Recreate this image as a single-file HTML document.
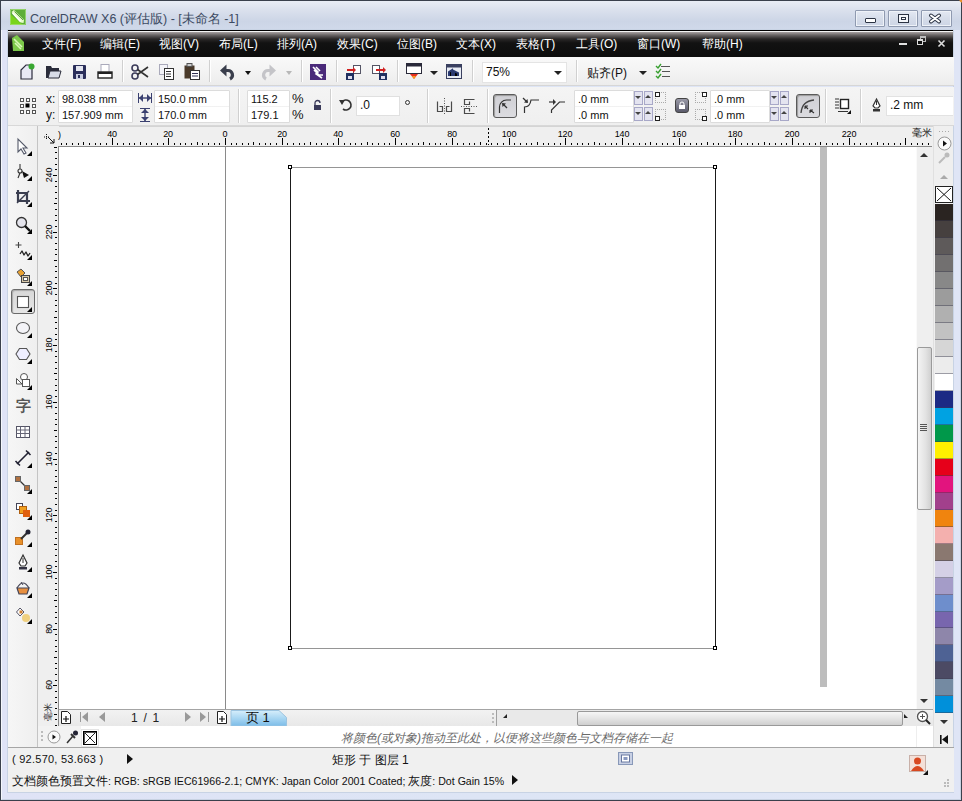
<!DOCTYPE html><html><head><meta charset="utf-8"><style>
*{box-sizing:border-box;margin:0;padding:0}
html,body{width:962px;height:801px;overflow:hidden;background:#d9e2f1;font-family:"Liberation Sans",sans-serif;}
.a{position:absolute}
svg{position:absolute;overflow:visible}
.wb{top:10px;height:17px;border:1px solid #8f9ab0;border-radius:1px;background:linear-gradient(#e4e9f3,#d6ddea 50%,#cdd5e5);box-shadow:inset 0 0 0 1px #eef2f8}
.mi{top:36px;font-size:12px;color:#fff;white-space:nowrap}
.inp{position:absolute;background:#fff;font-size:11px;color:#111;padding-left:3px;white-space:nowrap;line-height:17px}
.t{position:absolute;font-size:12px;color:#111;white-space:nowrap}
.sep{position:absolute;width:1px;background:#d0d0d0;border-right:1px solid #fff;width:2px}
.dd{position:absolute;width:0;height:0;border-left:4px solid transparent;border-right:4px solid transparent;border-top:4px solid #222}
.tick{position:absolute;background:#000;width:1px}
.rl{position:absolute;font-size:9px;color:#000;letter-spacing:-0.2px;line-height:10px;white-space:nowrap}
.sw{position:absolute;left:935px;width:18px;height:17px;border-bottom:1px solid #9aa0a8}
</style></head><body>
<div class="a" style="left:0;top:0;width:962px;height:801px;border:1px solid #3a404c;background:linear-gradient(90deg,#dfe3f6,#dde5f5 50%,#dfe5f6)"></div>
<div class="a" style="left:1px;top:1px;width:960px;height:799px;border:1px solid #f4f7fc;border-bottom-color:#c8d2e2;border-right-color:#c8d2e2"></div>
<div class="a" style="left:1px;top:1px;width:960px;height:29px;background:linear-gradient(#e9edf5,#dbe1ed 30%,#ccd5e6 70%,#d0d9ea)"></div>
<div class="a" style="left:7px;top:29px;width:947px;height:764px;border:1px solid #c8d3e4"></div>
<svg style="left:10px;top:9px" width="16" height="16" viewBox="0 0 16 16"><rect x="0" y="0" width="16" height="16" fill="#5eae38"/><path d="M0 5 L0 16 L13 16 Z" fill="#7ad41c"/><path d="M1.5 3 L4 1 L14 11 L13.5 14 L10.5 13.5 Z" fill="#e6fcc8"/><path d="M4.5 2.5 L13 11" stroke="#5e9a48" stroke-width="1"/><path d="M2.5 4 L10.5 12.5" stroke="#fff" stroke-width="1.5"/><path d="M0.5 0.5 H15.5 V15.5 H0.5Z" fill="none" stroke="#a8e080" stroke-width="1" opacity="0.7"/></svg>
<div class="a" style="left:30px;top:11px;font-size:12.5px;color:#3c4a62;white-space:nowrap">CorelDRAW X6 (评估版) - [未命名 -1]</div>
<div class="a wb" style="left:855px;width:30px"></div>
<div class="a wb" style="left:888px;width:30px"></div>
<div class="a wb" style="left:921px;width:31px"></div>
<div class="a" style="left:865px;top:18px;width:11px;height:5px;border:1px solid #2c3444;background:#fff;border-radius:1px"></div>
<div class="a" style="left:898px;top:14px;width:11px;height:9px;border:1px solid #2c3444;background:#fff;box-shadow:inset 0 0 0 2px #f4f6fa, inset 0 0 0 3px #2c3444"></div>
<svg style="left:928px;top:14px" width="14" height="9" viewBox="0 0 14 9"><path d="M3 1.5 L11 7.5 M11 1.5 L3 7.5" stroke="#2c3444" stroke-width="4" stroke-linecap="round"/><path d="M3 1.5 L11 7.5 M11 1.5 L3 7.5" stroke="#fff" stroke-width="2" stroke-linecap="round"/></svg>
<div class="a" style="left:8px;top:30px;width:945px;height:27px;background:linear-gradient(#000 0,#000 1px,#f4f4f4 1px,#f4f4f4 2px,#a9a3a3 2px,#6a6666 5px,#2a2828 9px,#121212 13px,#0d0d0d 26px)"></div>
<svg style="left:12px;top:35px" width="13" height="17" viewBox="0 0 13 17"><path d="M0 3 L5 0 L12 7 L12 16 L1 16 Z" fill="#7cc84a"/><path d="M2 4 L10 12 M3 8 L9 14" stroke="#d8f8b8" stroke-width="1.6"/></svg>
<div class="a mi" style="left:42px">文件(F)</div>
<div class="a mi" style="left:100px">编辑(E)</div>
<div class="a mi" style="left:159px">视图(V)</div>
<div class="a mi" style="left:219px">布局(L)</div>
<div class="a mi" style="left:277px">排列(A)</div>
<div class="a mi" style="left:337px">效果(C)</div>
<div class="a mi" style="left:397px">位图(B)</div>
<div class="a mi" style="left:456px">文本(X)</div>
<div class="a mi" style="left:516px">表格(T)</div>
<div class="a mi" style="left:576px">工具(O)</div>
<div class="a mi" style="left:637px">窗口(W)</div>
<div class="a mi" style="left:702px">帮助(H)</div>
<div class="a" style="left:899px;top:43px;width:8px;height:2px;background:#e0e0e0"></div>
<div class="a" style="left:920px;top:36px;width:6px;height:6px;border:1px solid #bbb;border-top-width:2px"></div>
<div class="a" style="left:917px;top:39px;width:6px;height:6px;border:1px solid #ddd;border-top-width:2px;background:#111"></div>
<svg style="left:938px;top:40px" width="7" height="7" viewBox="0 0 7 7"><path d="M0.5 0.5 L6.5 6.5 M6.5 0.5 L0.5 6.5" stroke="#ddd" stroke-width="1.6"/></svg>
<div class="a" style="left:8px;top:57px;width:946px;height:29px;background:linear-gradient(#f9f9f9,#f2f2f2 60%,#ececec);border-bottom:1px solid #d6d6d6"></div>
<div class="sep" style="left:122px;top:60px;height:22px"></div>
<div class="sep" style="left:209px;top:60px;height:22px"></div>
<div class="sep" style="left:301px;top:60px;height:22px"></div>
<div class="sep" style="left:336px;top:60px;height:22px"></div>
<div class="sep" style="left:397px;top:60px;height:22px"></div>
<div class="sep" style="left:472px;top:60px;height:22px"></div>
<div class="sep" style="left:576px;top:60px;height:22px"></div>
<svg style="left:19px;top:63px" width="16" height="17" viewBox="0 0 16 17"><path d="M2 16 L2 7 L7 2 L13 2 L13 16 Z" fill="#e8e8f4" stroke="#2c2c3c" stroke-width="1.2"/><circle cx="12.5" cy="3.5" r="3" fill="#3aa832"/></svg>
<svg style="left:45px;top:64px" width="17" height="15" viewBox="0 0 17 15"><path d="M1 14 L1 2 L6 2 L7 4 L14 4 L14 14 Z" fill="#2a2c3a"/><path d="M3 14 L5 7 L16 7 L14 14 Z" fill="#d8dce8" stroke="#2a2c3a"/></svg>
<svg style="left:73px;top:65px" width="13" height="14" viewBox="0 0 13 14"><rect x="0" y="0" width="13" height="14" rx="1" fill="#2a2e5a"/><rect x="3" y="1" width="7" height="5" fill="#e4e6f0"/><rect x="3" y="9" width="7" height="5" fill="#c8cce0"/><rect x="5" y="10" width="2" height="3" fill="#2a2e5a"/></svg>
<svg style="left:97px;top:64px" width="16" height="15" viewBox="0 0 16 15"><rect x="4" y="0.5" width="8" height="8" fill="#fff" stroke="#aab" /><rect x="1" y="8" width="14" height="6" fill="#fff" stroke="#222" stroke-width="1.4"/><rect x="1" y="8" width="14" height="2" fill="#222"/></svg>
<svg style="left:131px;top:64px" width="18" height="16" viewBox="0 0 18 16"><circle cx="4" cy="4" r="3" fill="none" stroke="#3c3c5a" stroke-width="1.6"/><circle cx="4" cy="12" r="3" fill="none" stroke="#3c3c5a" stroke-width="1.6"/><path d="M6.5 5.5 L17 13 M6.5 10.5 L17 3" stroke="#333" stroke-width="1.6"/></svg>
<svg style="left:159px;top:64px" width="15" height="16" viewBox="0 0 15 16"><rect x="0.5" y="0.5" width="8" height="10" fill="#f4f4f8" stroke="#aab"/><rect x="5.5" y="4.5" width="9" height="11" fill="#fff" stroke="#333"/><path d="M7 7.5h5M7 10h5M7 12.5h5" stroke="#333"/></svg>
<svg style="left:184px;top:63px" width="16" height="17" viewBox="0 0 16 17"><rect x="0.5" y="2.5" width="10" height="13" fill="#4a3a2a"/><rect x="3" y="0.5" width="5" height="3" fill="#ccc" stroke="#555"/><rect x="6.5" y="7.5" width="9" height="9" fill="#fff" stroke="#333"/><path d="M8 10.5h6M8 13h6" stroke="#335"/></svg>
<svg style="left:219px;top:64px" width="17" height="16" viewBox="0 0 17 16"><path d="M1 6.5 L7.5 0.5 L7.5 12.5 Z" fill="#3a3e4c"/><path d="M6 6.5 H9 A4.5 4.5 0 0 1 11 15" stroke="#3a3e4c" stroke-width="3.2" fill="none"/></svg>
<div class="dd" style="left:245px;top:71px;border-width:4px 3px 0;border-top-color:#111"></div>
<svg style="left:260px;top:64px" width="17" height="16" viewBox="0 0 17 16"><path d="M16 6.5 L9.5 0.5 L9.5 12.5 Z" fill="#c4c4c8"/><path d="M11 6.5 H8 A4.5 4.5 0 0 0 6 15" stroke="#c4c4c8" stroke-width="3.2" fill="none"/></svg>
<div class="dd" style="left:286px;top:71px;border-width:4px 3px 0;border-top-color:#b8b8b8"></div>
<svg style="left:310px;top:64px" width="16" height="16" viewBox="0 0 16 16"><rect width="16" height="16" fill="#4a2a7a"/><path d="M3 3 L8 8 L6 10 L12 14 M6 3 L10 7 M4 6 L9 11 L13 11" stroke="#fff" stroke-width="1.6" fill="none"/></svg>
<svg style="left:345px;top:64px" width="17" height="17" viewBox="0 0 17 17"><rect x="8.5" y="1.5" width="7" height="8" fill="#fff" stroke="#556"/><path d="M2 6 L10 6" stroke="#d02020" stroke-width="2"/><path d="M8 3 L11 6 L8 9Z" fill="#d02020"/><rect x="1" y="9" width="8" height="7" fill="#203060"/><rect x="3" y="12" width="4" height="3" fill="#dde"/></svg>
<svg style="left:371px;top:64px" width="17" height="17" viewBox="0 0 17 17"><rect x="1.5" y="1.5" width="7" height="8" fill="#fff" stroke="#556"/><path d="M5 6 L14 6" stroke="#d02020" stroke-width="2"/><path d="M12 3 L15 6 L12 9Z" fill="#d02020"/><rect x="8" y="9" width="8" height="7" fill="#203060"/><rect x="10" y="12" width="4" height="3" fill="#dde"/></svg>
<svg style="left:406px;top:63px" width="16" height="17" viewBox="0 0 16 17"><rect x="0.5" y="0.5" width="15" height="10" fill="#fff" stroke="#2a2a3a"/><rect x="0.5" y="0.5" width="15" height="3" fill="#2a2a3a"/><path d="M4 11 L12 11 L8 16Z" fill="#e83020"/><path d="M6 13 L10 13 L8 16Z" fill="#f8a020"/></svg>
<div class="dd" style="left:430px;top:71px;border-top-color:#222"></div>
<svg style="left:446px;top:64px" width="16" height="15" viewBox="0 0 16 15"><rect x="0.5" y="0.5" width="15" height="14" fill="#e8ecf4" stroke="#3a4060"/><rect x="0.5" y="0.5" width="15" height="3" fill="#3a4060"/><path d="M3 12 L3 8 L6 6 L6 12 M8 12 L8 7 L12 9 L12 12" stroke="#2a3a70" stroke-width="2"/></svg>
<div class="inp" style="left:482px;top:62px;width:85px;height:21px;border:1px solid #e4e4e4;line-height:19px;font-size:12px;padding-left:3px">75%</div>
<div class="dd" style="left:554px;top:71px;border-top-color:#222"></div>
<div class="t" style="left:587px;top:65px;font-size:12px">贴齐(P)</div>
<div class="dd" style="left:639px;top:71px;border-top-color:#222"></div>
<svg style="left:655px;top:63px" width="16" height="17" viewBox="0 0 16 17"><path d="M1 3 L3 5 L6 1 M1 8 L3 10 L6 6 M1 13 L3 15 L6 11" stroke="#38a030" stroke-width="1.4" fill="none"/><path d="M6 3.5h9M7 8.5h8M7 13.5h8" stroke="#555" stroke-width="1"/></svg>
<div class="a" style="left:8px;top:87px;width:946px;height:39px;background:linear-gradient(#f4f4f4,#efefef);border-bottom:1px solid #d8d8d8"></div>
<div class="sep" style="left:238px;top:89px;height:34px"></div>
<div class="sep" style="left:330px;top:89px;height:34px"></div>
<div class="sep" style="left:427px;top:89px;height:34px"></div>
<div class="sep" style="left:487px;top:89px;height:34px"></div>
<div class="sep" style="left:825px;top:89px;height:34px"></div>
<div class="sep" style="left:860px;top:89px;height:34px"></div>
<svg style="left:20px;top:98px" width="16" height="16" viewBox="0 0 16 16"><rect x="0.5" y="0.5" width="3" height="3" fill="#fff" stroke="#555"/><rect x="6.5" y="0.5" width="3" height="3" fill="#fff" stroke="#555"/><rect x="12.5" y="0.5" width="3" height="3" fill="#fff" stroke="#555"/><rect x="0.5" y="6.5" width="3" height="3" fill="#fff" stroke="#555"/><rect x="5.5" y="5.5" width="4" height="4" fill="#000"/><rect x="12.5" y="6.5" width="3" height="3" fill="#fff" stroke="#555"/><rect x="0.5" y="12.5" width="3" height="3" fill="#fff" stroke="#555"/><rect x="6.5" y="12.5" width="3" height="3" fill="#fff" stroke="#555"/><rect x="12.5" y="12.5" width="3" height="3" fill="#fff" stroke="#555"/></svg>
<div class="t" style="left:46px;top:92px">x:</div>
<div class="t" style="left:46px;top:108px">y:</div>
<div class="a" style="left:58px;top:90px;width:75px;height:33px;border:1px solid #dcdcdc;border-radius:1px"></div>
<div class="a" style="left:154px;top:90px;width:76px;height:33px;border:1px solid #dcdcdc;border-radius:1px"></div>
<div class="a" style="left:247px;top:90px;width:43px;height:33px;border:1px solid #dcdcdc;border-radius:1px"></div>
<div class="a" style="left:574px;top:90px;width:60px;height:33px;border:1px solid #dcdcdc;border-radius:1px"></div>
<div class="a" style="left:710px;top:90px;width:60px;height:33px;border:1px solid #dcdcdc;border-radius:1px"></div>
<div class="inp" style="left:59px;top:91px;width:73px;height:15px">98.038 mm</div>
<div class="inp" style="left:59px;top:107px;width:73px;height:15px">157.909 mm</div>
<svg style="left:138px;top:93px" width="14" height="10" viewBox="0 0 14 10"><path d="M1 5h12" stroke="#3a4070" stroke-width="1.4"/><path d="M1 5 L5 1 L5 9Z M13 5 L9 1 L9 9Z" fill="#3a4070"/><path d="M0.5 0v10M13.5 0v10" stroke="#3a4070"/></svg>
<svg style="left:140px;top:108px" width="10" height="14" viewBox="0 0 10 14"><path d="M5 1v12" stroke="#3a4070" stroke-width="1.4"/><path d="M5 1 L1 5 L9 5Z M5 13 L1 9 L9 9Z" fill="#3a4070"/><path d="M0 0.5h10M0 13.5h10" stroke="#3a4070"/></svg>
<div class="inp" style="left:155px;top:91px;width:74px;height:15px">150.0 mm</div>
<div class="inp" style="left:155px;top:107px;width:74px;height:15px">170.0 mm</div>
<div class="inp" style="left:248px;top:91px;width:41px;height:15px">115.2</div>
<div class="inp" style="left:248px;top:107px;width:41px;height:15px">179.1</div>
<div class="t" style="left:292px;top:91px;font-size:13px">%</div>
<div class="t" style="left:292px;top:107px;font-size:13px">%</div>
<svg style="left:313px;top:100px" width="9" height="10" viewBox="0 0 9 10"><path d="M2 5 V3 a2.5 2.5 0 0 1 5 0" stroke="#3a3a5a" fill="none" stroke-width="1.3"/><rect x="1" y="5" width="7" height="5" fill="#3a3a5a"/></svg>
<svg style="left:339px;top:98px" width="14" height="14" viewBox="0 0 14 14"><path d="M3 4 A5 5 0 1 1 4 11" stroke="#333" stroke-width="1.6" fill="none"/><path d="M0 2 L6 2 L3 7Z" fill="#333"/></svg>
<div class="inp" style="left:356px;top:96px;width:44px;height:20px;line-height:16px;border:1px solid #e0e0e0;font-size:12px">.0</div>
<div class="a" style="left:405px;top:100px;width:5px;height:5px;border:1px solid #333;border-radius:50%"></div>
<svg style="left:436px;top:98px" width="17" height="17" viewBox="0 0 17 17"><path d="M1.5 3.5v10h5v-5h-3" fill="none" stroke="#4a4a4a" stroke-width="1.2"/><path d="M15.5 3.5v10h-5v-5h3" fill="none" stroke="#4a4a4a" stroke-width="1.2"/><path d="M8.5 0v17" stroke="#555" stroke-dasharray="1 1.5"/></svg>
<svg style="left:461px;top:98px" width="17" height="17" viewBox="0 0 17 17"><path d="M13.5 1.5h-10v5h5v-3" fill="none" stroke="#4a4a4a" stroke-width="1.2"/><path d="M13.5 15.5h-10v-5h5v3" fill="none" stroke="#4a4a4a" stroke-width="1.2"/><path d="M0 8.5h17" stroke="#555" stroke-dasharray="1 1.5"/></svg>
<div class="a" style="left:493px;top:94px;width:24px;height:24px;border:1px solid #5a5a5a;border-radius:3px;background:linear-gradient(#cfcfd4,#dcdce0);box-shadow:inset 1px 1px 1px #999"></div>
<svg style="left:497px;top:98px" width="16" height="16" viewBox="0 0 16 16"><path d="M2.5 15 V9 A7 7 0 0 1 9.5 2 H14" stroke="#333" fill="none" stroke-width="1.2"/><path d="M10 10 L6 6" stroke="#333" stroke-width="1.2"/><path d="M5 5 L9 5.5 L5.5 9Z" fill="#333"/></svg>
<svg style="left:522px;top:97px" width="18" height="18" viewBox="0 0 18 18"><path d="M2.5 16 V10 Q8 10 9 3 H17" stroke="#333" fill="none" stroke-width="1.2"/><path d="M1 1 L5 5" stroke="#333" stroke-width="1.2"/><path d="M6 6 L2 5.5 L5.5 2Z" fill="#333"/></svg>
<svg style="left:548px;top:97px" width="18" height="18" viewBox="0 0 18 18"><path d="M3.5 16 V13 L11.5 5 H17" stroke="#333" fill="none" stroke-width="1.2"/><path d="M1 5 H6" stroke="#333" stroke-width="1.2"/><path d="M8 5 L5 2 L5 8Z" fill="#333"/></svg>
<div class="inp" style="left:575px;top:91px;width:58px;height:15px">.0 mm</div>
<div class="inp" style="left:575px;top:107px;width:58px;height:15px">.0 mm</div>
<div class="a" style="left:634px;top:91px;width:9px;height:14px;border:1px solid #a8a8c8;background:#e4e4f0"></div>
<div class="a" style="left:644px;top:91px;width:9px;height:14px;border:1px solid #a8a8c8;background:#e4e4f0"></div>
<div class="dd" style="left:635px;top:96px;border-width:3px 3px 0;border-top-color:#444"></div>
<div class="dd" style="left:645px;top:95px;border-width:0 3px 3px;border-bottom:3px solid #444"></div>
<div class="a" style="left:634px;top:107px;width:9px;height:14px;border:1px solid #a8a8c8;background:#e4e4f0"></div>
<div class="a" style="left:644px;top:107px;width:9px;height:14px;border:1px solid #a8a8c8;background:#e4e4f0"></div>
<div class="dd" style="left:635px;top:112px;border-width:3px 3px 0;border-top-color:#444"></div>
<div class="dd" style="left:645px;top:111px;border-width:0 3px 3px;border-bottom:3px solid #444"></div>
<div class="a" style="left:655px;top:92px;width:11px;height:11px;border:1px dotted #aaa"></div>
<div class="a" style="left:655px;top:92px;width:5px;height:5px;border:1px solid #222;background:#fff"></div>
<div class="a" style="left:655px;top:109px;width:11px;height:11px;border:1px dotted #aaa"></div>
<div class="a" style="left:655px;top:116px;width:5px;height:5px;border:1px solid #222;background:#fff"></div>
<div class="a" style="left:675px;top:98px;width:14px;height:15px;border:1px solid #444;border-radius:3px;background:linear-gradient(#9a9aa8,#5a5a6a)"></div>
<svg style="left:678px;top:101px" width="8" height="9" viewBox="0 0 8 9"><path d="M2 4V3a2 2 0 0 1 4 0v1" stroke="#fff" fill="none"/><rect x="1" y="4" width="6" height="4" fill="#fff"/></svg>
<div class="a" style="left:695px;top:92px;width:11px;height:11px;border:1px dotted #aaa"></div>
<div class="a" style="left:702px;top:92px;width:5px;height:5px;border:1px solid #222;background:#fff"></div>
<div class="a" style="left:695px;top:109px;width:11px;height:11px;border:1px dotted #aaa"></div>
<div class="a" style="left:702px;top:116px;width:5px;height:5px;border:1px solid #222;background:#fff"></div>
<div class="inp" style="left:711px;top:91px;width:58px;height:15px">.0 mm</div>
<div class="inp" style="left:711px;top:107px;width:58px;height:15px">.0 mm</div>
<div class="a" style="left:770px;top:91px;width:9px;height:14px;border:1px solid #a8a8c8;background:#e4e4f0"></div>
<div class="a" style="left:780px;top:91px;width:9px;height:14px;border:1px solid #a8a8c8;background:#e4e4f0"></div>
<div class="dd" style="left:771px;top:96px;border-width:3px 3px 0;border-top-color:#444"></div>
<div class="dd" style="left:781px;top:95px;border-width:0 3px 3px;border-bottom:3px solid #444"></div>
<div class="a" style="left:770px;top:107px;width:9px;height:14px;border:1px solid #a8a8c8;background:#e4e4f0"></div>
<div class="a" style="left:780px;top:107px;width:9px;height:14px;border:1px solid #a8a8c8;background:#e4e4f0"></div>
<div class="dd" style="left:771px;top:112px;border-width:3px 3px 0;border-top-color:#444"></div>
<div class="dd" style="left:781px;top:111px;border-width:0 3px 3px;border-bottom:3px solid #444"></div>
<div class="a" style="left:796px;top:94px;width:24px;height:24px;border:1px solid #5a5a5a;border-radius:3px;background:linear-gradient(#cfcfd4,#dcdce0);box-shadow:inset 1px 1px 1px #999"></div>
<svg style="left:799px;top:97px" width="18" height="18" viewBox="0 0 18 18"><path d="M2 16 Q3 4 15 3" stroke="#444" fill="none" stroke-width="1.3"/><path d="M6 9 L9 12 M6 9v3M6 9h3 M11 13 L15 16 M11 13v3M11 13h3" stroke="#333" stroke-width="1.1" fill="none"/></svg>
<svg style="left:834px;top:97px" width="18" height="18" viewBox="0 0 18 18"><path d="M1 2h4M1 5h4M1 8h4M1 11h4" stroke="#333"/><rect x="6.5" y="2.5" width="8" height="9" fill="#fff" stroke="#222" stroke-width="1.4"/><path d="M4 14.5h10" stroke="#333"/><path d="M17 13 L17 17 L13 17Z" fill="#111"/></svg>
<svg style="left:871px;top:98px" width="11" height="14" viewBox="0 0 11 14"><path d="M5.5 1 L9 8 L7 10 H4 L2 8 Z" fill="#fff" stroke="#333" stroke-width="1.2"/><path d="M5.5 3 V7" stroke="#333"/><rect x="2" y="11" width="7" height="2.5" fill="#333"/></svg>
<div class="inp" style="left:886px;top:96px;width:67px;height:20px;line-height:17px;border:1px solid #e2e2e2;border-right:0;font-size:12px">.2 mm</div>
<div class="a" style="left:8px;top:126px;width:30px;height:621px;background:linear-gradient(90deg,#f6f6f6,#efefef);border-right:1px solid #c4c4c4"></div>
<div class="a" style="left:11px;top:289px;width:24px;height:25px;border:1px solid #6a6a6a;border-radius:3px;background:linear-gradient(#d8d8d8,#e6e6e6);box-shadow:inset 1px 1px 1px #aaa"></div>
<svg style="left:15px;top:138px" width="16" height="16" viewBox="0 0 16 16"><path d="M3 1 L3 14 L6 11 L9 16 L11 15 L8 10 L12 10 Z" fill="#fff" stroke="#555a6a" stroke-width="1.1"/></svg>
<svg style="left:27px;top:151px" width="5" height="5" viewBox="0 0 5 5"><path d="M5 0 L5 5 L0 5Z" fill="#000"/></svg>
<svg style="left:15px;top:163px" width="16" height="16" viewBox="0 0 16 16"><path d="M5 1 L5 6 M3 8 a2 2 0 1 0 4 0 a2 2 0 1 0 -4 0 M5 10 L3 15" stroke="#333" fill="none" stroke-width="1.1"/><path d="M7 8 L14 12 L9 15 Z" fill="#111"/></svg>
<svg style="left:27px;top:176px" width="5" height="5" viewBox="0 0 5 5"><path d="M5 0 L5 5 L0 5Z" fill="#000"/></svg>
<svg style="left:15px;top:189px" width="16" height="16" viewBox="0 0 16 16"><path d="M3 1 V12 H15 M1 4 H12 V15" stroke="#3a3e50" stroke-width="2.2" fill="none"/><path d="M2 14 L14 2" stroke="#3a3e50" stroke-width="1.4"/></svg>
<svg style="left:27px;top:202px" width="5" height="5" viewBox="0 0 5 5"><path d="M5 0 L5 5 L0 5Z" fill="#000"/></svg>
<svg style="left:15px;top:216px" width="16" height="16" viewBox="0 0 16 16"><circle cx="6.5" cy="6.5" r="5" fill="#e4e4ec" stroke="#333" stroke-width="1.3"/><path d="M10 10 L15 15" stroke="#111" stroke-width="2.4"/></svg>
<svg style="left:27px;top:229px" width="5" height="5" viewBox="0 0 5 5"><path d="M5 0 L5 5 L0 5Z" fill="#000"/></svg>
<svg style="left:15px;top:242px" width="16" height="16" viewBox="0 0 16 16"><path d="M3.5 0v6M0.5 3h6" stroke="#444" stroke-width="1.1"/><path d="M5 12 L7 9 L9 13 L11 10 L13 14 L15 11" stroke="#222" fill="none" stroke-width="1.3" stroke-linejoin="round"/></svg>
<svg style="left:27px;top:255px" width="5" height="5" viewBox="0 0 5 5"><path d="M5 0 L5 5 L0 5Z" fill="#000"/></svg>
<svg style="left:15px;top:268px" width="16" height="16" viewBox="0 0 16 16"><path d="M2 4 L6 1 L10 5 L6 9 Z" fill="#e8a030" stroke="#555"/><rect x="6.5" y="7.5" width="8" height="7" fill="#d8c8a8" stroke="#444"/><rect x="8.5" y="9.5" width="4" height="3" fill="#fff" stroke="#555"/></svg>
<svg style="left:27px;top:281px" width="5" height="5" viewBox="0 0 5 5"><path d="M5 0 L5 5 L0 5Z" fill="#000"/></svg>
<svg style="left:15px;top:294px" width="16" height="16" viewBox="0 0 16 16"><rect x="2.5" y="2.5" width="11" height="11" fill="#fff" stroke="#555" stroke-width="1.1"/></svg>
<svg style="left:27px;top:307px" width="5" height="5" viewBox="0 0 5 5"><path d="M5 0 L5 5 L0 5Z" fill="#000"/></svg>
<svg style="left:15px;top:320px" width="16" height="16" viewBox="0 0 16 16"><ellipse cx="8" cy="8" rx="6.5" ry="5.5" fill="#f4f4f8" stroke="#555" stroke-width="1.1"/></svg>
<svg style="left:27px;top:333px" width="5" height="5" viewBox="0 0 5 5"><path d="M5 0 L5 5 L0 5Z" fill="#000"/></svg>
<svg style="left:15px;top:346px" width="16" height="16" viewBox="0 0 16 16"><path d="M4.5 2.5 H11.5 L15 8 L11.5 13.5 H4.5 L1 8 Z" fill="#eef" stroke="#555" stroke-width="1.1"/></svg>
<svg style="left:27px;top:359px" width="5" height="5" viewBox="0 0 5 5"><path d="M5 0 L5 5 L0 5Z" fill="#000"/></svg>
<svg style="left:15px;top:372px" width="16" height="16" viewBox="0 0 16 16"><path d="M1.5 6.5 L7 12 H1.5 Z" fill="#fff" stroke="#555"/><circle cx="9" cy="5" r="3.5" fill="#fff" stroke="#555"/><rect x="7.5" y="7.5" width="7" height="7" fill="#fff" stroke="#555"/></svg>
<svg style="left:27px;top:385px" width="5" height="5" viewBox="0 0 5 5"><path d="M5 0 L5 5 L0 5Z" fill="#000"/></svg>
<svg style="left:15px;top:397px" width="16" height="16" viewBox="0 0 16 16"><text x="8" y="14" font-size="15" font-weight="bold" text-anchor="middle" fill="#555">字</text></svg>
<svg style="left:15px;top:424px" width="16" height="16" viewBox="0 0 16 16"><rect x="1.5" y="2.5" width="13" height="11" fill="#fff" stroke="#556"/><path d="M1.5 6h13M1.5 9.5h13M5.5 2.5v11M10 2.5v11" stroke="#667"/></svg>
<svg style="left:15px;top:450px" width="16" height="16" viewBox="0 0 16 16"><path d="M2 14 L14 2" stroke="#223" stroke-width="1.6"/><path d="M0.5 11 L5 15.5 M11 0.5 L15.5 5" stroke="#223" stroke-width="1.6"/></svg>
<svg style="left:27px;top:463px" width="5" height="5" viewBox="0 0 5 5"><path d="M5 0 L5 5 L0 5Z" fill="#000"/></svg>
<svg style="left:15px;top:476px" width="16" height="16" viewBox="0 0 16 16"><path d="M3 3 L12 12" stroke="#333" stroke-width="1.2"/><rect x="0.5" y="0.5" width="5" height="5" fill="#b07040" stroke="#666"/><rect x="9.5" y="9.5" width="5" height="5" fill="#b07040" stroke="#666"/></svg>
<svg style="left:27px;top:489px" width="5" height="5" viewBox="0 0 5 5"><path d="M5 0 L5 5 L0 5Z" fill="#000"/></svg>
<svg style="left:15px;top:502px" width="16" height="16" viewBox="0 0 16 16"><rect x="1.5" y="1.5" width="6" height="6" fill="#fff" stroke="#445"/><rect x="4.5" y="4.5" width="7" height="7" fill="#f0a020" stroke="#b06010"/><rect x="8" y="8" width="7" height="7" fill="#e06010"/></svg>
<svg style="left:27px;top:515px" width="5" height="5" viewBox="0 0 5 5"><path d="M5 0 L5 5 L0 5Z" fill="#000"/></svg>
<svg style="left:15px;top:529px" width="16" height="16" viewBox="0 0 16 16"><rect x="0.5" y="8.5" width="7" height="7" fill="#e8902a" stroke="#c07020"/><path d="M6 10 L12 4" stroke="#333" stroke-width="2"/><circle cx="13" cy="3" r="2.5" fill="#223"/></svg>
<svg style="left:27px;top:542px" width="5" height="5" viewBox="0 0 5 5"><path d="M5 0 L5 5 L0 5Z" fill="#000"/></svg>
<svg style="left:15px;top:554px" width="16" height="16" viewBox="0 0 16 16"><path d="M8 1 L12 9 L10 12 H6 L4 9 Z" fill="#fff" stroke="#333" stroke-width="1.2"/><path d="M8 4 V9" stroke="#333"/><rect x="4" y="13" width="8" height="2.5" fill="#334"/></svg>
<svg style="left:27px;top:567px" width="5" height="5" viewBox="0 0 5 5"><path d="M5 0 L5 5 L0 5Z" fill="#000"/></svg>
<svg style="left:15px;top:580px" width="16" height="16" viewBox="0 0 16 16"><path d="M2 8 H14 L12 14 H4 Z" fill="#e89040" stroke="#445" stroke-width="1.2"/><path d="M2 8 Q8 -2 14 8" stroke="#445" fill="none" stroke-width="1.2"/><path d="M6 2 L8 5" stroke="#445"/></svg>
<svg style="left:27px;top:593px" width="5" height="5" viewBox="0 0 5 5"><path d="M5 0 L5 5 L0 5Z" fill="#000"/></svg>
<svg style="left:15px;top:606px" width="16" height="16" viewBox="0 0 16 16"><path d="M4 1 L8 5 L4 9 L0.5 5 Z" fill="#fff" stroke="#556" transform="translate(1 1)"/><rect x="4.5" y="4.5" width="3" height="3" fill="#d08030"/><circle cx="11" cy="12" r="4" fill="#f0d080"/></svg>
<svg style="left:27px;top:619px" width="5" height="5" viewBox="0 0 5 5"><path d="M5 0 L5 5 L0 5Z" fill="#000"/></svg>
<div class="a" style="left:38px;top:126px;width:895px;height:21px;background:#efefef;border-top:1px solid #d4d4d4"></div>
<div class="a" style="left:38px;top:126px;width:21px;height:600px;background:#efefef"></div>
<div class="a" style="left:58px;top:146px;width:874px;height:1px;background:#8a8a8a"></div>
<div class="a" style="left:58px;top:146px;width:1px;height:580px;background:#8a8a8a"></div>
<div class="a" style="left:488px;top:128px;width:1px;height:17px;background:repeating-linear-gradient(#000 0,#000 2px,transparent 2px,transparent 4px)"></div>
<svg style="left:44px;top:133px" width="12" height="11" viewBox="0 0 12 11"><path d="M0 4h5M2.5 1v6" stroke="#111" stroke-dasharray="1 1"/><path d="M4 4 L10 10 M10 6v4h-4" stroke="#111" fill="none"/></svg>
<div class="tick" style="left:61px;top:143px;height:2px"></div><div class="tick" style="left:66px;top:143px;height:2px"></div><div class="tick" style="left:72px;top:143px;height:2px"></div><div class="tick" style="left:78px;top:143px;height:2px"></div><div class="tick" style="left:83px;top:142px;height:3px"></div><div class="tick" style="left:89px;top:143px;height:2px"></div><div class="tick" style="left:95px;top:143px;height:2px"></div><div class="tick" style="left:100px;top:143px;height:2px"></div><div class="tick" style="left:106px;top:143px;height:2px"></div><div class="tick" style="left:112px;top:138px;height:7px"></div><div class="rl" style="left:97px;top:129px;width:30px;text-align:center">40</div><div class="tick" style="left:117px;top:143px;height:2px"></div><div class="tick" style="left:123px;top:143px;height:2px"></div><div class="tick" style="left:129px;top:143px;height:2px"></div><div class="tick" style="left:134px;top:143px;height:2px"></div><div class="tick" style="left:140px;top:142px;height:3px"></div><div class="tick" style="left:146px;top:143px;height:2px"></div><div class="tick" style="left:151px;top:143px;height:2px"></div><div class="tick" style="left:157px;top:143px;height:2px"></div><div class="tick" style="left:163px;top:143px;height:2px"></div><div class="tick" style="left:168px;top:138px;height:7px"></div><div class="rl" style="left:153px;top:129px;width:30px;text-align:center">20</div><div class="tick" style="left:174px;top:143px;height:2px"></div><div class="tick" style="left:180px;top:143px;height:2px"></div><div class="tick" style="left:185px;top:143px;height:2px"></div><div class="tick" style="left:191px;top:143px;height:2px"></div><div class="tick" style="left:197px;top:142px;height:3px"></div><div class="tick" style="left:202px;top:143px;height:2px"></div><div class="tick" style="left:208px;top:143px;height:2px"></div><div class="tick" style="left:214px;top:143px;height:2px"></div><div class="tick" style="left:219px;top:143px;height:2px"></div><div class="tick" style="left:225px;top:138px;height:7px"></div><div class="rl" style="left:210px;top:129px;width:30px;text-align:center">0</div><div class="tick" style="left:231px;top:143px;height:2px"></div><div class="tick" style="left:236px;top:143px;height:2px"></div><div class="tick" style="left:242px;top:143px;height:2px"></div><div class="tick" style="left:248px;top:143px;height:2px"></div><div class="tick" style="left:253px;top:142px;height:3px"></div><div class="tick" style="left:259px;top:143px;height:2px"></div><div class="tick" style="left:265px;top:143px;height:2px"></div><div class="tick" style="left:270px;top:143px;height:2px"></div><div class="tick" style="left:276px;top:143px;height:2px"></div><div class="tick" style="left:282px;top:138px;height:7px"></div><div class="rl" style="left:267px;top:129px;width:30px;text-align:center">20</div><div class="tick" style="left:287px;top:143px;height:2px"></div><div class="tick" style="left:293px;top:143px;height:2px"></div><div class="tick" style="left:299px;top:143px;height:2px"></div><div class="tick" style="left:304px;top:143px;height:2px"></div><div class="tick" style="left:310px;top:142px;height:3px"></div><div class="tick" style="left:316px;top:143px;height:2px"></div><div class="tick" style="left:321px;top:143px;height:2px"></div><div class="tick" style="left:327px;top:143px;height:2px"></div><div class="tick" style="left:333px;top:143px;height:2px"></div><div class="tick" style="left:338px;top:138px;height:7px"></div><div class="rl" style="left:323px;top:129px;width:30px;text-align:center">40</div><div class="tick" style="left:344px;top:143px;height:2px"></div><div class="tick" style="left:350px;top:143px;height:2px"></div><div class="tick" style="left:355px;top:143px;height:2px"></div><div class="tick" style="left:361px;top:143px;height:2px"></div><div class="tick" style="left:367px;top:142px;height:3px"></div><div class="tick" style="left:372px;top:143px;height:2px"></div><div class="tick" style="left:378px;top:143px;height:2px"></div><div class="tick" style="left:384px;top:143px;height:2px"></div><div class="tick" style="left:389px;top:143px;height:2px"></div><div class="tick" style="left:395px;top:138px;height:7px"></div><div class="rl" style="left:380px;top:129px;width:30px;text-align:center">60</div><div class="tick" style="left:401px;top:143px;height:2px"></div><div class="tick" style="left:406px;top:143px;height:2px"></div><div class="tick" style="left:412px;top:143px;height:2px"></div><div class="tick" style="left:418px;top:143px;height:2px"></div><div class="tick" style="left:423px;top:142px;height:3px"></div><div class="tick" style="left:429px;top:143px;height:2px"></div><div class="tick" style="left:435px;top:143px;height:2px"></div><div class="tick" style="left:440px;top:143px;height:2px"></div><div class="tick" style="left:446px;top:143px;height:2px"></div><div class="tick" style="left:452px;top:138px;height:7px"></div><div class="rl" style="left:437px;top:129px;width:30px;text-align:center">80</div><div class="tick" style="left:457px;top:143px;height:2px"></div><div class="tick" style="left:463px;top:143px;height:2px"></div><div class="tick" style="left:469px;top:143px;height:2px"></div><div class="tick" style="left:474px;top:143px;height:2px"></div><div class="tick" style="left:480px;top:142px;height:3px"></div><div class="tick" style="left:486px;top:143px;height:2px"></div><div class="tick" style="left:491px;top:143px;height:2px"></div><div class="tick" style="left:497px;top:143px;height:2px"></div><div class="tick" style="left:503px;top:143px;height:2px"></div><div class="tick" style="left:509px;top:138px;height:7px"></div><div class="rl" style="left:494px;top:129px;width:30px;text-align:center">100</div><div class="tick" style="left:514px;top:143px;height:2px"></div><div class="tick" style="left:520px;top:143px;height:2px"></div><div class="tick" style="left:526px;top:143px;height:2px"></div><div class="tick" style="left:531px;top:143px;height:2px"></div><div class="tick" style="left:537px;top:142px;height:3px"></div><div class="tick" style="left:543px;top:143px;height:2px"></div><div class="tick" style="left:548px;top:143px;height:2px"></div><div class="tick" style="left:554px;top:143px;height:2px"></div><div class="tick" style="left:560px;top:143px;height:2px"></div><div class="tick" style="left:565px;top:138px;height:7px"></div><div class="rl" style="left:550px;top:129px;width:30px;text-align:center">120</div><div class="tick" style="left:571px;top:143px;height:2px"></div><div class="tick" style="left:577px;top:143px;height:2px"></div><div class="tick" style="left:582px;top:143px;height:2px"></div><div class="tick" style="left:588px;top:143px;height:2px"></div><div class="tick" style="left:594px;top:142px;height:3px"></div><div class="tick" style="left:599px;top:143px;height:2px"></div><div class="tick" style="left:605px;top:143px;height:2px"></div><div class="tick" style="left:611px;top:143px;height:2px"></div><div class="tick" style="left:616px;top:143px;height:2px"></div><div class="tick" style="left:622px;top:138px;height:7px"></div><div class="rl" style="left:607px;top:129px;width:30px;text-align:center">140</div><div class="tick" style="left:628px;top:143px;height:2px"></div><div class="tick" style="left:633px;top:143px;height:2px"></div><div class="tick" style="left:639px;top:143px;height:2px"></div><div class="tick" style="left:645px;top:143px;height:2px"></div><div class="tick" style="left:650px;top:142px;height:3px"></div><div class="tick" style="left:656px;top:143px;height:2px"></div><div class="tick" style="left:662px;top:143px;height:2px"></div><div class="tick" style="left:667px;top:143px;height:2px"></div><div class="tick" style="left:673px;top:143px;height:2px"></div><div class="tick" style="left:679px;top:138px;height:7px"></div><div class="rl" style="left:664px;top:129px;width:30px;text-align:center">160</div><div class="tick" style="left:684px;top:143px;height:2px"></div><div class="tick" style="left:690px;top:143px;height:2px"></div><div class="tick" style="left:696px;top:143px;height:2px"></div><div class="tick" style="left:701px;top:143px;height:2px"></div><div class="tick" style="left:707px;top:142px;height:3px"></div><div class="tick" style="left:713px;top:143px;height:2px"></div><div class="tick" style="left:718px;top:143px;height:2px"></div><div class="tick" style="left:724px;top:143px;height:2px"></div><div class="tick" style="left:730px;top:143px;height:2px"></div><div class="tick" style="left:735px;top:138px;height:7px"></div><div class="rl" style="left:720px;top:129px;width:30px;text-align:center">180</div><div class="tick" style="left:741px;top:143px;height:2px"></div><div class="tick" style="left:747px;top:143px;height:2px"></div><div class="tick" style="left:752px;top:143px;height:2px"></div><div class="tick" style="left:758px;top:143px;height:2px"></div><div class="tick" style="left:764px;top:142px;height:3px"></div><div class="tick" style="left:769px;top:143px;height:2px"></div><div class="tick" style="left:775px;top:143px;height:2px"></div><div class="tick" style="left:781px;top:143px;height:2px"></div><div class="tick" style="left:786px;top:143px;height:2px"></div><div class="tick" style="left:792px;top:138px;height:7px"></div><div class="rl" style="left:777px;top:129px;width:30px;text-align:center">200</div><div class="tick" style="left:798px;top:143px;height:2px"></div><div class="tick" style="left:803px;top:143px;height:2px"></div><div class="tick" style="left:809px;top:143px;height:2px"></div><div class="tick" style="left:815px;top:143px;height:2px"></div><div class="tick" style="left:820px;top:142px;height:3px"></div><div class="tick" style="left:826px;top:143px;height:2px"></div><div class="tick" style="left:832px;top:143px;height:2px"></div><div class="tick" style="left:837px;top:143px;height:2px"></div><div class="tick" style="left:843px;top:143px;height:2px"></div><div class="tick" style="left:849px;top:138px;height:7px"></div><div class="rl" style="left:834px;top:129px;width:30px;text-align:center">220</div><div class="tick" style="left:854px;top:143px;height:2px"></div><div class="tick" style="left:860px;top:143px;height:2px"></div><div class="tick" style="left:866px;top:143px;height:2px"></div><div class="tick" style="left:871px;top:143px;height:2px"></div><div class="tick" style="left:877px;top:142px;height:3px"></div><div class="tick" style="left:883px;top:143px;height:2px"></div><div class="tick" style="left:888px;top:143px;height:2px"></div><div class="tick" style="left:894px;top:143px;height:2px"></div><div class="tick" style="left:900px;top:143px;height:2px"></div><div class="tick" style="left:905px;top:138px;height:7px"></div><div class="tick" style="left:911px;top:143px;height:2px"></div><div class="tick" style="left:917px;top:143px;height:2px"></div><div class="tick" style="left:922px;top:143px;height:2px"></div><div class="tick" style="left:928px;top:143px;height:2px"></div>
<div class="rl" style="left:58px;top:130px;">)</div>
<div class="rl" style="left:912px;top:128px;font-size:9.5px;letter-spacing:-0.5px;color:#111">毫米</div>
<div class="tick" style="left:54px;top:147px;width:3px;height:1px"></div><div class="tick" style="left:55px;top:152px;width:2px;height:1px"></div><div class="tick" style="left:55px;top:158px;width:2px;height:1px"></div><div class="tick" style="left:55px;top:164px;width:2px;height:1px"></div><div class="tick" style="left:55px;top:169px;width:2px;height:1px"></div><div class="tick" style="left:53px;top:175px;width:4px;height:1px"></div><div class="rl" style="left:34px;top:170px;width:30px;text-align:center;transform:rotate(-90deg);transform-origin:15px 5px">240</div><div class="tick" style="left:55px;top:181px;width:2px;height:1px"></div><div class="tick" style="left:55px;top:186px;width:2px;height:1px"></div><div class="tick" style="left:55px;top:192px;width:2px;height:1px"></div><div class="tick" style="left:55px;top:198px;width:2px;height:1px"></div><div class="tick" style="left:54px;top:203px;width:3px;height:1px"></div><div class="tick" style="left:55px;top:209px;width:2px;height:1px"></div><div class="tick" style="left:55px;top:215px;width:2px;height:1px"></div><div class="tick" style="left:55px;top:220px;width:2px;height:1px"></div><div class="tick" style="left:55px;top:226px;width:2px;height:1px"></div><div class="tick" style="left:53px;top:232px;width:4px;height:1px"></div><div class="rl" style="left:34px;top:227px;width:30px;text-align:center;transform:rotate(-90deg);transform-origin:15px 5px">220</div><div class="tick" style="left:55px;top:237px;width:2px;height:1px"></div><div class="tick" style="left:55px;top:243px;width:2px;height:1px"></div><div class="tick" style="left:55px;top:249px;width:2px;height:1px"></div><div class="tick" style="left:55px;top:254px;width:2px;height:1px"></div><div class="tick" style="left:54px;top:260px;width:3px;height:1px"></div><div class="tick" style="left:55px;top:266px;width:2px;height:1px"></div><div class="tick" style="left:55px;top:271px;width:2px;height:1px"></div><div class="tick" style="left:55px;top:277px;width:2px;height:1px"></div><div class="tick" style="left:55px;top:283px;width:2px;height:1px"></div><div class="tick" style="left:53px;top:288px;width:4px;height:1px"></div><div class="rl" style="left:34px;top:283px;width:30px;text-align:center;transform:rotate(-90deg);transform-origin:15px 5px">200</div><div class="tick" style="left:55px;top:294px;width:2px;height:1px"></div><div class="tick" style="left:55px;top:300px;width:2px;height:1px"></div><div class="tick" style="left:55px;top:305px;width:2px;height:1px"></div><div class="tick" style="left:55px;top:311px;width:2px;height:1px"></div><div class="tick" style="left:54px;top:317px;width:3px;height:1px"></div><div class="tick" style="left:55px;top:322px;width:2px;height:1px"></div><div class="tick" style="left:55px;top:328px;width:2px;height:1px"></div><div class="tick" style="left:55px;top:334px;width:2px;height:1px"></div><div class="tick" style="left:55px;top:339px;width:2px;height:1px"></div><div class="tick" style="left:53px;top:345px;width:4px;height:1px"></div><div class="rl" style="left:34px;top:340px;width:30px;text-align:center;transform:rotate(-90deg);transform-origin:15px 5px">180</div><div class="tick" style="left:55px;top:351px;width:2px;height:1px"></div><div class="tick" style="left:55px;top:356px;width:2px;height:1px"></div><div class="tick" style="left:55px;top:362px;width:2px;height:1px"></div><div class="tick" style="left:55px;top:368px;width:2px;height:1px"></div><div class="tick" style="left:54px;top:373px;width:3px;height:1px"></div><div class="tick" style="left:55px;top:379px;width:2px;height:1px"></div><div class="tick" style="left:55px;top:385px;width:2px;height:1px"></div><div class="tick" style="left:55px;top:390px;width:2px;height:1px"></div><div class="tick" style="left:55px;top:396px;width:2px;height:1px"></div><div class="tick" style="left:53px;top:402px;width:4px;height:1px"></div><div class="rl" style="left:34px;top:397px;width:30px;text-align:center;transform:rotate(-90deg);transform-origin:15px 5px">160</div><div class="tick" style="left:55px;top:407px;width:2px;height:1px"></div><div class="tick" style="left:55px;top:413px;width:2px;height:1px"></div><div class="tick" style="left:55px;top:419px;width:2px;height:1px"></div><div class="tick" style="left:55px;top:424px;width:2px;height:1px"></div><div class="tick" style="left:54px;top:430px;width:3px;height:1px"></div><div class="tick" style="left:55px;top:436px;width:2px;height:1px"></div><div class="tick" style="left:55px;top:441px;width:2px;height:1px"></div><div class="tick" style="left:55px;top:447px;width:2px;height:1px"></div><div class="tick" style="left:55px;top:453px;width:2px;height:1px"></div><div class="tick" style="left:53px;top:459px;width:4px;height:1px"></div><div class="rl" style="left:34px;top:454px;width:30px;text-align:center;transform:rotate(-90deg);transform-origin:15px 5px">140</div><div class="tick" style="left:55px;top:464px;width:2px;height:1px"></div><div class="tick" style="left:55px;top:470px;width:2px;height:1px"></div><div class="tick" style="left:55px;top:476px;width:2px;height:1px"></div><div class="tick" style="left:55px;top:481px;width:2px;height:1px"></div><div class="tick" style="left:54px;top:487px;width:3px;height:1px"></div><div class="tick" style="left:55px;top:493px;width:2px;height:1px"></div><div class="tick" style="left:55px;top:498px;width:2px;height:1px"></div><div class="tick" style="left:55px;top:504px;width:2px;height:1px"></div><div class="tick" style="left:55px;top:510px;width:2px;height:1px"></div><div class="tick" style="left:53px;top:515px;width:4px;height:1px"></div><div class="rl" style="left:34px;top:510px;width:30px;text-align:center;transform:rotate(-90deg);transform-origin:15px 5px">120</div><div class="tick" style="left:55px;top:521px;width:2px;height:1px"></div><div class="tick" style="left:55px;top:527px;width:2px;height:1px"></div><div class="tick" style="left:55px;top:532px;width:2px;height:1px"></div><div class="tick" style="left:55px;top:538px;width:2px;height:1px"></div><div class="tick" style="left:54px;top:544px;width:3px;height:1px"></div><div class="tick" style="left:55px;top:549px;width:2px;height:1px"></div><div class="tick" style="left:55px;top:555px;width:2px;height:1px"></div><div class="tick" style="left:55px;top:561px;width:2px;height:1px"></div><div class="tick" style="left:55px;top:566px;width:2px;height:1px"></div><div class="tick" style="left:53px;top:572px;width:4px;height:1px"></div><div class="rl" style="left:34px;top:567px;width:30px;text-align:center;transform:rotate(-90deg);transform-origin:15px 5px">100</div><div class="tick" style="left:55px;top:578px;width:2px;height:1px"></div><div class="tick" style="left:55px;top:583px;width:2px;height:1px"></div><div class="tick" style="left:55px;top:589px;width:2px;height:1px"></div><div class="tick" style="left:55px;top:595px;width:2px;height:1px"></div><div class="tick" style="left:54px;top:600px;width:3px;height:1px"></div><div class="tick" style="left:55px;top:606px;width:2px;height:1px"></div><div class="tick" style="left:55px;top:612px;width:2px;height:1px"></div><div class="tick" style="left:55px;top:617px;width:2px;height:1px"></div><div class="tick" style="left:55px;top:623px;width:2px;height:1px"></div><div class="tick" style="left:53px;top:629px;width:4px;height:1px"></div><div class="rl" style="left:34px;top:624px;width:30px;text-align:center;transform:rotate(-90deg);transform-origin:15px 5px">80</div><div class="tick" style="left:55px;top:634px;width:2px;height:1px"></div><div class="tick" style="left:55px;top:640px;width:2px;height:1px"></div><div class="tick" style="left:55px;top:646px;width:2px;height:1px"></div><div class="tick" style="left:55px;top:651px;width:2px;height:1px"></div><div class="tick" style="left:54px;top:657px;width:3px;height:1px"></div><div class="tick" style="left:55px;top:663px;width:2px;height:1px"></div><div class="tick" style="left:55px;top:668px;width:2px;height:1px"></div><div class="tick" style="left:55px;top:674px;width:2px;height:1px"></div><div class="tick" style="left:55px;top:680px;width:2px;height:1px"></div><div class="tick" style="left:53px;top:685px;width:4px;height:1px"></div><div class="rl" style="left:34px;top:680px;width:30px;text-align:center;transform:rotate(-90deg);transform-origin:15px 5px">60</div><div class="tick" style="left:55px;top:691px;width:2px;height:1px"></div><div class="tick" style="left:55px;top:697px;width:2px;height:1px"></div><div class="tick" style="left:55px;top:702px;width:2px;height:1px"></div><div class="tick" style="left:55px;top:708px;width:2px;height:1px"></div><div class="tick" style="left:54px;top:714px;width:3px;height:1px"></div><div class="tick" style="left:55px;top:719px;width:2px;height:1px"></div><div class="tick" style="left:55px;top:725px;width:2px;height:1px"></div>
<div class="rl" style="left:36px;top:707px;width:24px;text-align:center;transform:rotate(-90deg);font-size:9px;color:#333">毫米</div>
<div class="a" style="left:59px;top:147px;width:857px;height:562px;background:#fff"></div>
<div class="a" style="left:225px;top:147px;width:1px;height:562px;background:#8a8a8a"></div>
<div class="a" style="left:820px;top:147px;width:7px;height:540px;background:#bdbdbd"></div>
<div class="a" style="left:290px;top:167px;width:426px;height:482px;border:1px solid #1a1a1a;border-top-color:#959595;border-bottom-color:#959595"></div>
<div class="a" style="left:288px;top:165px;width:4px;height:4px;border:1px solid #000;background:#fff"></div>
<div class="a" style="left:288px;top:646px;width:4px;height:4px;border:1px solid #000;background:#fff"></div>
<div class="a" style="left:713px;top:165px;width:4px;height:4px;border:1px solid #000;background:#fff"></div>
<div class="a" style="left:713px;top:646px;width:4px;height:4px;border:1px solid #000;background:#fff"></div>
<div class="a" style="left:916px;top:147px;width:17px;height:562px;background:#efefef;border-left:1px solid #fafafa"></div>
<div class="dd" style="left:920px;top:153px;border-width:0 4px 4px;border-bottom:4px solid #333"></div>
<div class="dd" style="left:920px;top:699px;border-width:4px 4px 0;border-top:4px solid #333"></div>
<div class="a" style="left:917px;top:347px;width:15px;height:163px;border:1px solid #9a9a9a;border-radius:2px;background:linear-gradient(90deg,#f4f4f4,#e2e2e2 60%,#d0d0d0)"></div>
<div class="a" style="left:920px;top:424px;width:7px;height:1px;background:#555;box-shadow:0 2px 0 #555,0 4px 0 #555,0 6px 0 #555"></div>
<div class="a" style="left:933px;top:126px;width:20px;height:621px;background:#efefef;border-left:1px solid #e0e0e0"></div>
<div class="a" style="left:939px;top:131px;width:1px;height:1px;background:#aaa;box-shadow:3px 0 0 #aaa,6px 0 0 #aaa,9px 0 0 #aaa"></div>
<svg style="left:937px;top:136px" width="15" height="15" viewBox="0 0 15 15"><circle cx="7.5" cy="7.5" r="6.5" fill="#fafafa" stroke="#999"/><path d="M6 4.5 L10 7.5 L6 10.5Z" fill="#111"/></svg>
<svg style="left:938px;top:152px" width="12" height="12" viewBox="0 0 12 12"><path d="M1 11 L7 5" stroke="#bbb" stroke-width="2"/><circle cx="9" cy="3" r="2.5" fill="#bbb"/></svg>
<div class="dd" style="left:940px;top:175px;border-width:0 4px 4px;border-bottom:4px solid #aaa"></div>
<div class="a" style="left:935px;top:186px;width:18px;height:17px;background:#fff;border:1px solid #222"></div>
<svg style="left:937px;top:188px" width="14" height="13" viewBox="0 0 14 13"><path d="M0 0 L14 13 M14 0 L0 13" stroke="#111" stroke-width="1"/></svg>
<div class="a" style="left:935px;top:204px;width:18px;height:17px;background:#2a2421;border-bottom:1px solid rgba(60,60,80,0.45)"></div>
<div class="a" style="left:935px;top:221px;width:18px;height:17px;background:#46403f;border-bottom:1px solid rgba(60,60,80,0.45)"></div>
<div class="a" style="left:935px;top:238px;width:18px;height:17px;background:#5e5a5a;border-bottom:1px solid rgba(60,60,80,0.45)"></div>
<div class="a" style="left:935px;top:255px;width:18px;height:17px;background:#727070;border-bottom:1px solid rgba(60,60,80,0.45)"></div>
<div class="a" style="left:935px;top:272px;width:18px;height:17px;background:#888888;border-bottom:1px solid rgba(60,60,80,0.45)"></div>
<div class="a" style="left:935px;top:289px;width:18px;height:17px;background:#9c9c9c;border-bottom:1px solid rgba(60,60,80,0.45)"></div>
<div class="a" style="left:935px;top:306px;width:18px;height:17px;background:#b0b0b0;border-bottom:1px solid rgba(60,60,80,0.45)"></div>
<div class="a" style="left:935px;top:323px;width:18px;height:17px;background:#c2c2c2;border-bottom:1px solid rgba(60,60,80,0.45)"></div>
<div class="a" style="left:935px;top:340px;width:18px;height:17px;background:#d6d6d6;border-bottom:1px solid rgba(60,60,80,0.45)"></div>
<div class="a" style="left:935px;top:357px;width:18px;height:17px;background:#ececec;border-bottom:1px solid rgba(60,60,80,0.45)"></div>
<div class="a" style="left:935px;top:374px;width:18px;height:17px;background:#ffffff;border-bottom:1px solid rgba(60,60,80,0.45)"></div>
<div class="a" style="left:935px;top:391px;width:18px;height:17px;background:#1c2a84;border-bottom:1px solid rgba(60,60,80,0.45)"></div>
<div class="a" style="left:935px;top:408px;width:18px;height:17px;background:#00a2e2;border-bottom:1px solid rgba(60,60,80,0.45)"></div>
<div class="a" style="left:935px;top:425px;width:18px;height:17px;background:#00984a;border-bottom:1px solid rgba(60,60,80,0.45)"></div>
<div class="a" style="left:935px;top:442px;width:18px;height:17px;background:#fff000;border-bottom:1px solid rgba(60,60,80,0.45)"></div>
<div class="a" style="left:935px;top:459px;width:18px;height:17px;background:#e6001a;border-bottom:1px solid rgba(60,60,80,0.45)"></div>
<div class="a" style="left:935px;top:476px;width:18px;height:17px;background:#e2147e;border-bottom:1px solid rgba(60,60,80,0.45)"></div>
<div class="a" style="left:935px;top:493px;width:18px;height:17px;background:#a2408c;border-bottom:1px solid rgba(60,60,80,0.45)"></div>
<div class="a" style="left:935px;top:510px;width:18px;height:17px;background:#f0840e;border-bottom:1px solid rgba(60,60,80,0.45)"></div>
<div class="a" style="left:935px;top:527px;width:18px;height:17px;background:#f4b0ae;border-bottom:1px solid rgba(60,60,80,0.45)"></div>
<div class="a" style="left:935px;top:544px;width:18px;height:17px;background:#8a7870;border-bottom:1px solid rgba(60,60,80,0.45)"></div>
<div class="a" style="left:935px;top:561px;width:18px;height:17px;background:#d4d0e6;border-bottom:1px solid rgba(60,60,80,0.45)"></div>
<div class="a" style="left:935px;top:578px;width:18px;height:17px;background:#a49cc8;border-bottom:1px solid rgba(60,60,80,0.45)"></div>
<div class="a" style="left:935px;top:595px;width:18px;height:17px;background:#6e8ecc;border-bottom:1px solid rgba(60,60,80,0.45)"></div>
<div class="a" style="left:935px;top:612px;width:18px;height:16px;background:#7866ae;border-bottom:1px solid rgba(60,60,80,0.45)"></div>
<div class="a" style="left:935px;top:628px;width:18px;height:17px;background:#8e86aa;border-bottom:1px solid rgba(60,60,80,0.45)"></div>
<div class="a" style="left:935px;top:645px;width:18px;height:17px;background:#4e6294;border-bottom:1px solid rgba(60,60,80,0.45)"></div>
<div class="a" style="left:935px;top:662px;width:18px;height:17px;background:#4c4a64;border-bottom:1px solid rgba(60,60,80,0.45)"></div>
<div class="a" style="left:935px;top:679px;width:18px;height:17px;background:#748aa2;border-bottom:1px solid rgba(60,60,80,0.45)"></div>
<div class="a" style="left:935px;top:696px;width:18px;height:17px;background:#0090da;border-bottom:1px solid rgba(60,60,80,0.45)"></div>
<div class="dd" style="left:940px;top:720px;border-width:4px 4px 0;border-top:4px solid #333"></div>
<svg style="left:940px;top:735px" width="8" height="9" viewBox="0 0 8 9"><rect x="0" y="0" width="1.6" height="9" fill="#111"/><path d="M8 0 L2 4.5 L8 9Z" fill="#111"/></svg>
<div class="a" style="left:59px;top:709px;width:874px;height:17px;background:linear-gradient(#f2f2f2,#e8e8e8);border-top:1px solid #a4a4a4"></div>
<svg style="left:61px;top:711px" width="10" height="13" viewBox="0 0 10 13"><path d="M0.5 0.5 H6.5 L9.5 3.5 V12.5 H0.5 Z" fill="#fff" stroke="#222"/><path d="M5 5v6M2 8h6" stroke="#111" stroke-width="1.2"/></svg>
<svg style="left:217px;top:711px" width="10" height="13" viewBox="0 0 10 13"><path d="M0.5 0.5 H6.5 L9.5 3.5 V12.5 H0.5 Z" fill="#fff" stroke="#222"/><path d="M5 5v6M2 8h6" stroke="#111" stroke-width="1.2"/></svg>
<svg style="left:80px;top:712px" width="9" height="10" viewBox="0 0 9 10"><path d="M0.5 0v10" stroke="#999"/><path d="M8 0 L2 5 L8 10Z" fill="#999"/></svg>
<svg style="left:98px;top:712px" width="7" height="10" viewBox="0 0 7 10"><path d="M7 0 L1 5 L7 10Z" fill="#999"/></svg>
<div class="t" style="left:131px;top:711px;font-size:12px;color:#222;letter-spacing:1.2px">1 / 1</div>
<svg style="left:185px;top:712px" width="7" height="10" viewBox="0 0 7 10"><path d="M0 0 L6 5 L0 10Z" fill="#999"/></svg>
<svg style="left:200px;top:712px" width="9" height="10" viewBox="0 0 9 10"><path d="M8.5 0v10" stroke="#999"/><path d="M0 0 L6 5 L0 10Z" fill="#999"/></svg>
<svg style="left:231px;top:710px" width="56" height="16" viewBox="0 0 56 16"><defs><linearGradient id="tg" x1="0" y1="0" x2="0" y2="1"><stop offset="0" stop-color="#d6eefb"/><stop offset="0.5" stop-color="#a8d6f2"/><stop offset="1" stop-color="#7cbce8"/></linearGradient></defs><path d="M0 0.5 H48 L55.5 7.5 V16 H0 Z" fill="url(#tg)" stroke="#9cc4e0"/></svg>
<div class="t" style="left:246px;top:709px;font-size:13px;color:#111">页 1</div>
<div class="a" style="left:492px;top:713px;width:2px;height:2px;background:#bbb;box-shadow:0 4px 0 #bbb,0 8px 0 #bbb"></div>
<div class="a" style="left:496px;top:710px;width:1px;height:16px;background:#a0a0a0"></div>
<div class="a" style="left:497px;top:710px;width:419px;height:16px;background:#e9e9e9"></div>
<div class="dd" style="left:503px;top:714px;border-width:4px 4px 4px 0;border-right:4px solid #222;border-top-color:transparent"></div>
<div class="dd" style="left:904px;top:714px;border-width:4px 0 4px 4px;border-left:4px solid #222;border-top-color:transparent"></div>
<div class="a" style="left:577px;top:711px;width:326px;height:15px;border:1px solid #999;border-radius:2px;background:linear-gradient(#f6f6f6,#e4e4e4 50%,#cfcfcf)"></div>
<svg style="left:916px;top:710px" width="16" height="16" viewBox="0 0 16 16"><circle cx="6.5" cy="6.5" r="5" fill="#fff" stroke="#555" stroke-width="1.3"/><path d="M4 6.5h5M6.5 4v5" stroke="#555"/><path d="M10 10 L14 14" stroke="#222" stroke-width="2"/></svg>
<div class="a" style="left:38px;top:726px;width:895px;height:21px;background:#fff"></div>
<div class="a" style="left:38px;top:726px;width:43px;height:21px;background:#f2f2f2"></div>
<div class="a" style="left:41px;top:731px;width:2px;height:2px;background:#bbb;box-shadow:0 4px 0 #bbb,0 8px 0 #bbb"></div>
<svg style="left:47px;top:730px" width="14" height="14" viewBox="0 0 14 14"><circle cx="7" cy="7" r="6" fill="#fafafa" stroke="#999"/><path d="M5.5 4.5 L9 7 L5.5 9.5Z" fill="#111"/></svg>
<svg style="left:66px;top:730px" width="12" height="14" viewBox="0 0 12 14"><path d="M1 13 L7 6" stroke="#333" stroke-width="1.5"/><path d="M5 4 L9 8" stroke="#333" stroke-width="2"/><circle cx="9.5" cy="3" r="2.5" fill="#223"/></svg>
<div class="a" style="left:81px;top:729px;width:18px;height:18px;background:#fff;border:1px solid #e4e4e4"></div>
<div class="a" style="left:83px;top:731px;width:14px;height:14px;background:#fff;border:1px solid #000;box-shadow:inset 1px 1px 0 #555"></div>
<svg style="left:85px;top:733px" width="10" height="10" viewBox="0 0 10 10"><path d="M0 0 L10 10 M10 0 L0 10" stroke="#222"/></svg>
<div class="t" style="left:341px;top:730px;font-size:12px;color:#6a6a6a;font-style:italic">将颜色(或对象)拖动至此处，以便将这些颜色与文档存储在一起</div>
<div class="a" style="left:916px;top:726px;width:17px;height:21px;background:#fff;border-left:1px solid #eee"></div>
<div class="a" style="left:8px;top:747px;width:946px;height:45px;background:#f0f0f0;border-top:1px solid #a6a6a6"></div>
<div class="t" style="left:12px;top:753px;font-size:11px;color:#111;letter-spacing:0.25px">( 92.570, 53.663 )</div>
<svg style="left:127px;top:754px" width="6" height="10" viewBox="0 0 6 10"><path d="M0 0 L6 5 L0 10Z" fill="#111"/></svg>
<div class="t" style="left:332px;top:752px;font-size:12px;color:#111">矩形 于 图层 1</div>
<svg style="left:618px;top:752px" width="15" height="13" viewBox="0 0 15 13"><rect x="0.5" y="0.5" width="14" height="12" fill="#c8d0e4" stroke="#8898b8"/><rect x="3.5" y="3" width="8" height="7" fill="#fff" stroke="#6878a0"/><rect x="5.5" y="5" width="4" height="3" fill="#8898c0"/></svg>
<div class="t" style="left:12px;top:773px;font-size:12px;color:#111">文档颜色预置文件<span style="font-size:10.6px">: RGB: sRGB IEC61966-2.1; CMYK: Japan Color 2001 Coated; </span>灰度<span style="font-size:10.6px">: Dot Gain 15%</span></div>
<svg style="left:512px;top:775px" width="6" height="10" viewBox="0 0 6 10"><path d="M0 0 L6 5 L0 10Z" fill="#111"/></svg>
<svg style="left:909px;top:755px" width="20" height="20" viewBox="0 0 20 20"><rect x="0.5" y="0.5" width="16" height="16" fill="#f4e0d8" stroke="#c8b0a8"/><circle cx="8.5" cy="6" r="3.5" fill="#d84820"/><path d="M2 16 Q8.5 6 15 16Z" fill="#d84820"/><path d="M19 15 L19 20 L14 20Z" fill="#111"/></svg>
<div class="a" style="left:944px;top:785px;width:2px;height:2px;background:#bbb;box-shadow:3px 0 0 #bbb,3px -3px 0 #bbb,0 -3px 0 #bbb,3px -6px 0 #bbb"></div>
<div class="a" style="left:958px;top:0;width:4px;height:4px;background:radial-gradient(circle at 100% 0,#e8902a 0,#e8902a 2px,transparent 3px)"></div>
</body></html>
